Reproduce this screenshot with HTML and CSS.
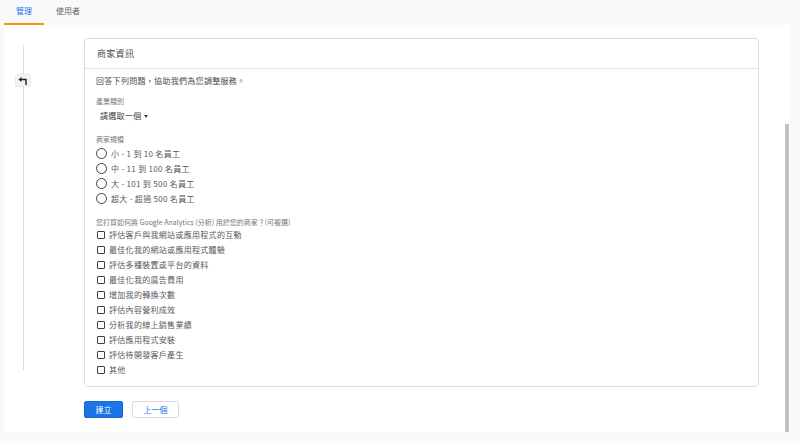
FILE: index.html
```html
<!DOCTYPE html>
<html lang="zh-Hant">
<head>
  <meta charset="UTF-8">
  <title>商家資訊</title>
  <link rel="stylesheet" href="styles.css">
</head>
<body>
  <nav class="tabs">
    <a href="#" class="tab active">管理</a>
    <a href="#" class="tab">使用者</a>
  </nav>

  <div class="panel">
    <div class="rail">
      <div class="rail-line"></div>
      <button class="rail-btn">
        <svg width="10" height="8" viewBox="0 0 10 8">
          <path d="M8 8V2.5H2.5" fill="none" stroke="#202124" stroke-width="1.4"/>
          <path d="M0.5 2.5L3.5 0v5z" fill="#202124"/>
        </svg>
      </button>
    </div>

    <div class="content">
      <div class="card">
        <div class="card-head">商家資訊</div>
        <div class="card-body">
          <p class="intro">回答下列問題，協助我們為您調整服務。</p>

          <div class="label first">產業類別</div>
          <div class="select">請選取一個 <span class="caret"></span></div>

          <div class="label">商家規模</div>
          <ul class="options radios">
            <li><span class="radio"></span>小 - 1 到 10 名員工</li>
            <li><span class="radio"></span>中 - 11 到 100 名員工</li>
            <li><span class="radio"></span>大 - 101 到 500 名員工</li>
            <li><span class="radio"></span>超大 - 超過 500 名員工</li>
          </ul>

          <div class="label">您打算如何將 Google Analytics (分析) 用於您的商家？(可複選)</div>
          <ul class="options checks">
            <li><span class="check"></span>評估客戶與我網站或應用程式的互動</li>
            <li><span class="check"></span>最佳化我的網站或應用程式體驗</li>
            <li><span class="check"></span>評估多種裝置或平台的資料</li>
            <li><span class="check"></span>最佳化我的廣告費用</li>
            <li><span class="check"></span>增加我的轉換次數</li>
            <li><span class="check"></span>評估內容營利成效</li>
            <li><span class="check"></span>分析我的線上銷售業績</li>
            <li><span class="check"></span>評估應用程式安裝</li>
            <li><span class="check"></span>評估待開發客戶產生</li>
            <li><span class="check"></span>其他</li>
          </ul>
        </div>
      </div>

      <div class="actions">
        <button class="btn primary">建立</button>
        <button class="btn secondary">上一個</button>
      </div>
    </div>

    <div class="scroll-thumb"></div>
  </div>
</body>
</html>
```

FILE: styles.css
```css
* {
  margin: 0;
  padding: 0;
  box-sizing: border-box;
}

body {
  font-family: "Noto Sans CJK TC", "Noto Sans", sans-serif;
  background: #f8f9fa;
  color: #3c4043;
  font-size: 8px;
  width: 800px;
  height: 441px;
  overflow: hidden;
}

/* Tabs */
.tabs {
  display: flex;
  height: 25px;
  padding-left: 4px;
}

.tab {
  width: 40px;
  height: 25px;
  display: flex;
  align-items: center;
  justify-content: center;
  font-size: 8px;
  color: #5f6368;
  text-decoration: none;
  padding-bottom: 3px;
  border-bottom: 2px solid transparent;
}

.tab.active {
  color: #1a73e8;
  border-bottom-color: #f29900;
}

.tab + .tab {
  margin-left: 4px;
}

/* Panel */
.panel {
  position: relative;
  margin-left: 4px;
  width: 786px;
  height: 407px;
  background: #fff;
  display: flex;
}

.rail {
  width: 80px;
  position: relative;
}

.rail-line {
  position: absolute;
  left: 18.5px;
  top: 20px;
  height: 325px;
  width: 1px;
  background: #dadce0;
}

.rail-btn {
  position: absolute;
  left: 11px;
  top: 49px;
  width: 16px;
  height: 13px;
  background: #f1f3f4;
  border: 1px solid #e8eaed;
  border-radius: 2px;
  display: flex;
  align-items: center;
  justify-content: center;
}

.content {
  width: 675px;
  padding-top: 13px;
}

/* Card */
.card {
  border: 1px solid #dadce0;
  border-radius: 4px;
  height: 349px;
}

.card-head {
  height: 30px;
  padding-left: 12px;
  display: flex;
  align-items: center;
  font-size: 9px;
  color: #4a4d51;
  letter-spacing: 0.3px;
  border-bottom: 1px solid #e0e0e0;
}

.card-body {
  padding: 6px 12px 0 11px;
}

.intro {
  line-height: 12px;
  font-size: 8px;
  color: #4a4d51;
  letter-spacing: 0.3px;
}

.label {
  font-size: 7px;
  line-height: 10px;
  color: #70757a;
  margin-top: 11px;
}

.label.first {
  margin-top: 9px;
}

.select {
  margin-top: 3px;
  line-height: 14px;
  padding-left: 4px;
  font-size: 8px;
  color: #3c4043;
  letter-spacing: 0.3px;
  display: flex;
  align-items: center;
  gap: 2px;
}

.caret {
  width: 0;
  height: 0;
  border-left: 2.5px solid transparent;
  border-right: 2.5px solid transparent;
  border-top: 3px solid #3c4043;
}

.options {
  list-style: none;
  margin-top: 2px;
}

.checks {
  margin-top: 0;
}

.options li {
  height: 15px;
  display: flex;
  align-items: center;
  font-size: 8px;
  color: #55595e;
  letter-spacing: 0.3px;
}

.radio {
  width: 11px;
  height: 11px;
  border: 1.3px solid #3c4043;
  border-radius: 50%;
  margin-right: 4px;
}

.check {
  width: 8px;
  height: 8px;
  border: 1.3px solid #3c4043;
  border-radius: 1px;
  margin-left: 1px;
  margin-right: 4px;
}

/* Buttons */
.actions {
  display: flex;
  gap: 9px;
  margin-top: 14px;
}

.btn {
  height: 17px;
  font-family: inherit;
  font-size: 8px;
  border-radius: 2px;
  cursor: pointer;
}

.btn.primary {
  width: 39px;
  background: #1a73e8;
  border: 1px solid #1967d2;
  color: #fff;
}

.btn.secondary {
  width: 47px;
  background: #fff;
  border: 1px solid #dadce0;
  color: #1a73e8;
}

/* Fake scrollbar */
.scroll-thumb {
  position: absolute;
  right: 1px;
  top: 99px;
  width: 4px;
  height: 308px;
  background: #c1c1c1;
}
```
